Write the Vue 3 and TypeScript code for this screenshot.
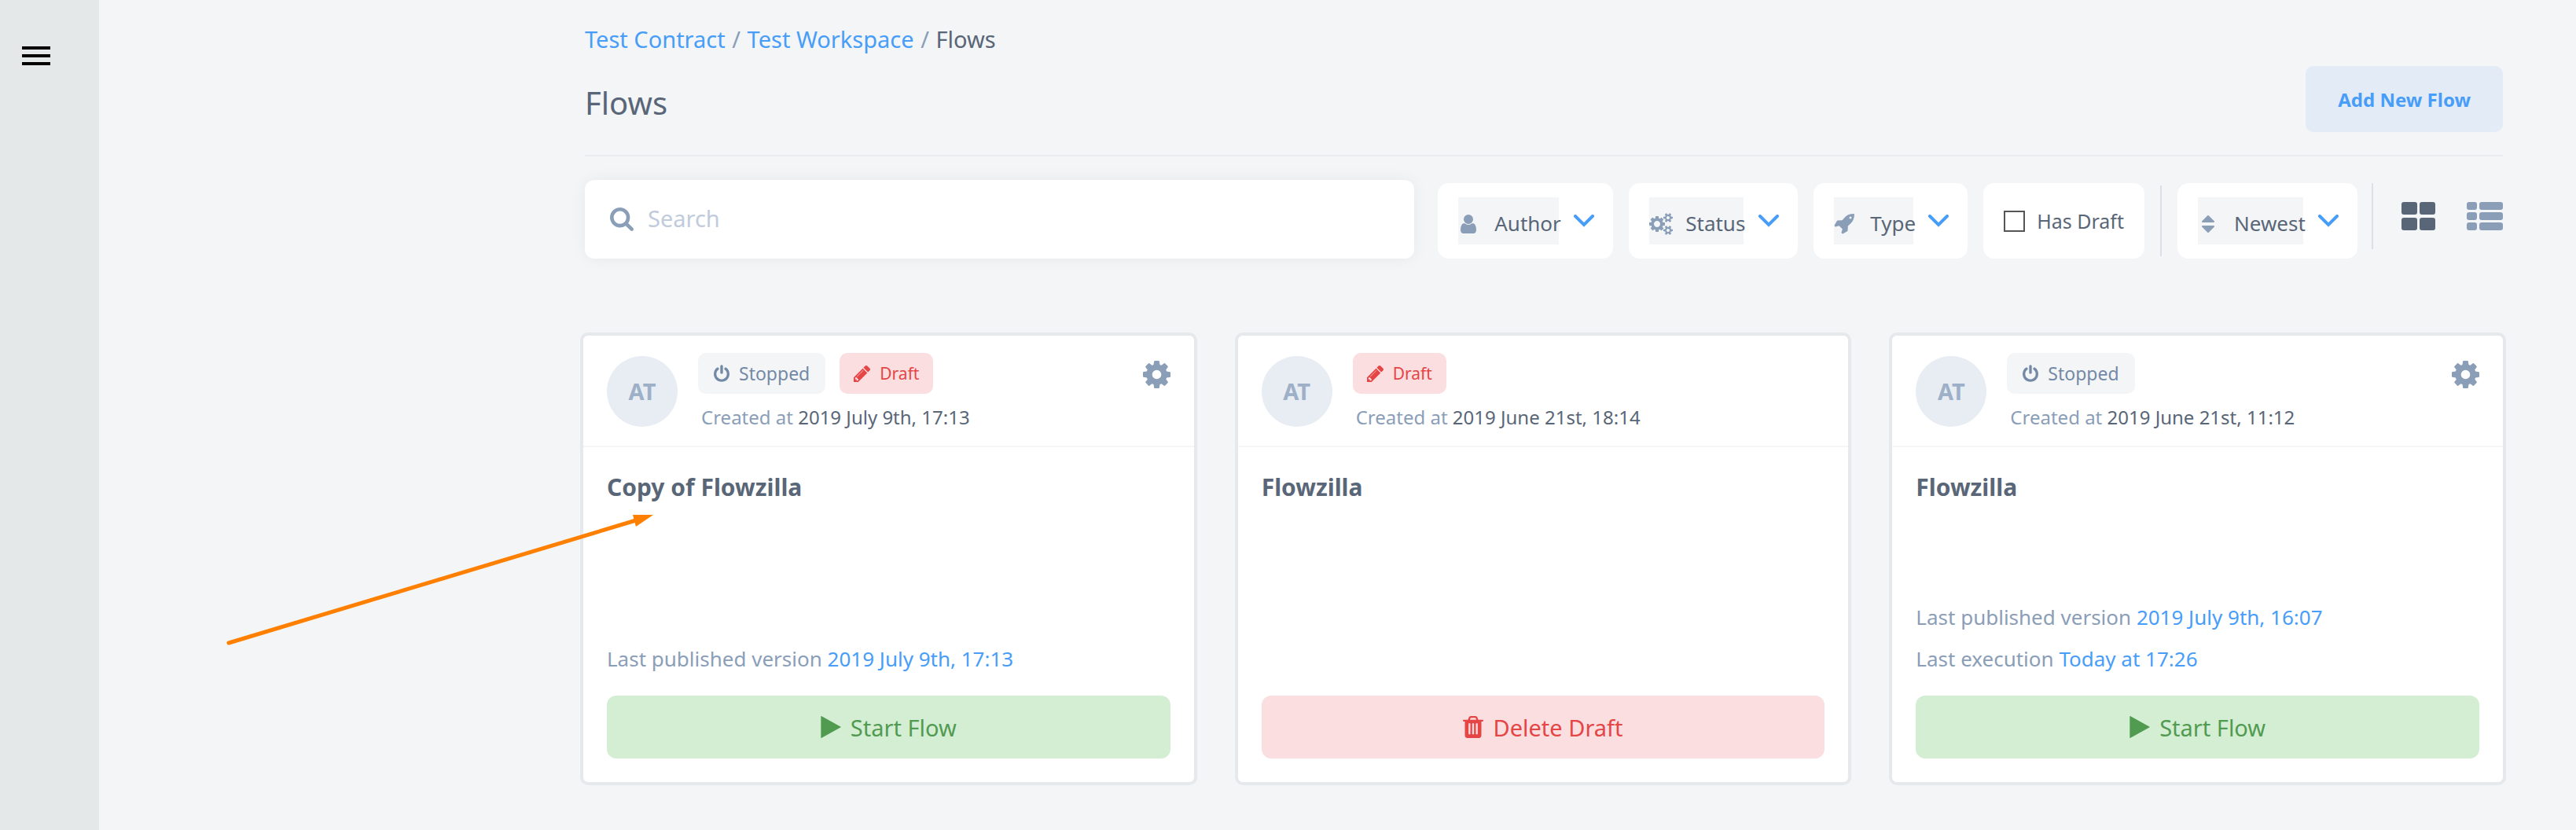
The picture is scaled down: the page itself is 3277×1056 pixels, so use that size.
<script setup lang="ts">
import { ref } from 'vue'

interface Glyph {
  box: string
  d: string
}

interface Filter {
  id: string
  label: string
  icon: string
}

interface Flow {
  id: number
  title: string
  stopped: boolean
  draft: boolean
  created: string
  published?: string
  executed?: string
}

const glyphs: Record<string, Glyph> = {
  search: {
    box: '64 128 1664 1664',
    d: 'M1216 832q0-185-131.5-316.5T768 384 451.5 515.5 320 832t131.5 316.5T768 1280t316.5-131.5T1216 832zm512 832q0 52-38 90t-90 38q-54 0-90-38l-343-342q-179 124-399 124-143 0-273.5-55.5t-225-150-150-225T64 832t55.5-273.5 150-225 225-150T768 128t273.5 55.5 225 150 150 225T1472 832q0 220-124 399l343 343q37 37 37 90z',
  },
  user: {
    box: '256 128 1280 1536',
    d: 'M1536 1399q0 109-62.5 187t-150.5 78h-854q-88 0-150.5-78t-62.5-187q0-85 8.5-160.5t31.5-152 58.5-131 94-89 134.5-34.5q131 128 313 128t313-128q76 0 134.5 34.5t94 89 58.5 131 31.5 152 8.5 160.5zm-256-887q0 159-112.5 271.5t-271.5 112.5-271.5-112.5-112.5-271.5 112.5-271.5 271.5-112.5 271.5 112.5 112.5 271.5z',
  },
  cogs: {
    box: '0 0 1920 1792',
    d: 'M896 896q0-106-75-181t-181-75-181 75-75 181 75 181 181 75 181-75 75-181zm768 512q0-52-38-90t-90-38-90 38-38 90q0 53 37.5 90.5t90.5 37.5 90.5-37.5 37.5-90.5zm0-1024q0-52-38-90t-90-38-90 38-38 90q0 53 37.5 90.5t90.5 37.5 90.5-37.5 37.5-90.5zm-384 421v185q0 10-7 19.5t-16 10.5l-155 24q-11 35-32 76 34 48 90 115 7 11 7 20 0 12-7 19-23 30-82.5 89.5t-78.5 59.5q-11 0-21-7l-115-90q-37 19-77 31-11 108-23 155-7 24-30 24h-186q-11 0-20-7.5t-10-17.5l-23-153q-34-10-75-31l-118 89q-7 7-20 7-11 0-21-8-144-133-144-160 0-9 7-19 10-14 41-53t47-61q-23-44-35-82l-152-24q-10-1-17-9.5t-7-19.5v-185q0-10 7-19.5t16-10.5l155-24q11-35 32-76-34-48-90-115-7-11-7-20 0-12 7-20 22-30 82-89t79-59q11 0 21 7l115 90q34-18 77-32 11-108 23-154 7-24 30-24h186q11 0 20 7.5t10 17.5l23 153q34 10 75 31l118-89q8-7 20-7 11 0 21 8 144 133 144 160 0 8-7 19-12 16-42 54t-45 60q23 48 34 82l152 23q10 2 17 10.5t7 19.5zm640 533v140q0 16-149 31-12 27-30 52 51 113 51 138 0 4-4 7-122 71-124 71-8 0-46-47t-52-68q-20 2-30 2t-30-2q-14 21-52 68t-46 47q-2 0-124-71-4-3-4-7 0-25 51-138-18-25-30-52-149-15-149-31v-140q0-16 149-31 13-29 30-52-51-113-51-138 0-4 4-7 4-2 35-20t59-34 30-16q8 0 46 46.5t52 67.5q20-2 30-2t30 2q51-71 92-112l6-2q4 0 124 70 4 3 4 7 0 25-51 138 17 23 30 52 149 15 149 31zm0-1024v140q0 16-149 31-12 27-30 52 51 113 51 138 0 4-4 7-122 71-124 71-8 0-46-47t-52-68q-20 2-30 2t-30-2q-14 21-52 68t-46 47q-2 0-124-71-4-3-4-7 0-25 51-138-18-25-30-52-149-15-149-31v-140q0-16 149-31 13-29 30-52-51-113-51-138 0-4 4-7 4-2 35-20t59-34 30-16q8 0 46 46.5t52 67.5q20-2 30-2t30 2q51-71 92-112l6-2q4 0 124 70 4 3 4 7 0 25-51 138 17 23 30 52 149 15 149 31z',
  },
  rocket: {
    box: '0 128 1664 1664',
    d: 'M1440 448q0-40-28-68t-68-28-68 28-28 68 28 68 68 28 68-28 28-68zm224-288q0 249-75.5 430.5t-253.5 360.5q-81 80-195 176l-20 379q-2 16-16 26l-384 224q-7 4-16 4-12 0-23-9l-64-64q-13-14-8-32l85-276-281-281-276 85q-3 1-9 1-14 0-23-9l-64-64q-17-19-5-39l224-384q10-14 26-16l379-20q96-114 176-195 188-187 358-258t431-71q14 0 24 9.5t10 22.5z',
  },
  sort: {
    box: '384 192 1024 1408',
    d: 'M1408 1088q0 26-19 45l-448 448q-19 19-45 19t-45-19l-448-448q-19-19-19-45t19-45 45-19h896q26 0 45 19t19 45zm0-384q0 26-19 45t-45 19h-896q-26 0-45-19t-19-45 19-45l448-448q19-19 45-19t45 19l448 448q19 19 19 45z',
  },
  cog: {
    box: '128 128 1536 1536',
    d: 'M1152 896q0-106-75-181t-181-75-181 75-75 181 75 181 181 75 181-75 75-181zm512-109v222q0 12-8 23t-20 13l-185 28q-19 54-39 91 35 50 107 138 10 12 10 25t-9 23q-27 37-99 108t-94 71q-12 0-26-9l-138-108q-44 23-91 38-16 136-29 186-7 28-36 28h-222q-14 0-24.5-8.5t-11.5-21.5l-28-184q-49-16-90-37l-141 107q-10 9-25 9-14 0-25-11-126-114-165-168-7-10-7-23 0-12 8-23 15-21 51-66.5t54-70.5q-27-50-41-99l-183-27q-13-2-21-12.5t-8-23.5v-222q0-12 8-23t19-13l186-28q14-46 39-92-40-57-107-138-10-12-10-24 0-10 9-23 26-36 98.5-107.5t94.5-71.5q13 0 26 10l138 107q44-23 91-38 16-136 29-186 7-28 36-28h222q14 0 24.5 8.5t11.5 21.5l28 184q49 16 90 37l142-107q9-9 24-9 13 0 25 10 129 119 165 170 7 8 7 22 0 12-8 23-15 21-51 66.5t-54 70.5q26 50 41 98l183 28q13 2 21 12.5t8 23.5z',
  },
  power: {
    box: '128 0 1536 1664',
    d: 'M1664 896q0 156-61 298t-164 245-245 164-298 61-298-61-245-164-164-245-61-298q0-182 80.5-343t226.5-270q43-32 95.5-25t83.5 50q32 42 24.5 94.5t-49.5 84.5q-98 74-151.5 181t-53.5 228q0 104 40.5 198.5t109.5 163.5 163.5 109.5 198.5 40.5 198.5-40.5 163.5-109.5 109.5-163.5 40.5-198.5q0-121-53.5-228t-151.5-181q-42-32-49.5-84.5t24.5-94.5q31-43 84-50t95 25q146 109 226.5 270t80.5 343zm-640-768v640q0 52-38 90t-90 38-90-38-38-90v-640q0-52 38-90t90-38 90 38 38 90z',
  },
  pencil: {
    box: '128 149 1515 1515',
    d: 'M491 1536l91-91-235-235-91 91v107h128v128h107zm523-928q0-22-22-22-10 0-17 7l-542 542q-7 7-7 17 0 22 22 22 10 0 17-7l542-542q7-7 7-17zm-54-192l416 416-832 832h-416v-416zm683 96q0 53-37 90l-166 166-416-416 166-165q36-38 90-38 53 0 91 38l235 234q37 39 37 91z',
  },
  play: {
    box: '192 118 1407 1556',
    d: 'M1576 927l-1328 738q-23 13-39.5 3t-16.5-36v-1472q0-26 16.5-36t39.5 3l1328 738q23 13 23 31t-23 31z',
  },
  trash: {
    box: '192 128 1408 1536',
    d: 'M704 1376v-704q0-14-9-23t-23-9h-64q-14 0-23 9t-9 23v704q0 14 9 23t23 9h64q14 0 23-9t9-23zm256 0v-704q0-14-9-23t-23-9h-64q-14 0-23 9t-9 23v704q0 14 9 23t23 9h64q14 0 23-9t9-23zm256 0v-704q0-14-9-23t-23-9h-64q-14 0-23 9t-9 23v704q0 14 9 23t23 9h64q14 0 23-9t9-23zm-544-992h448l-48-117q-7-9-17-11h-317q-10 2-17 11zm928 32v64q0 14-9 23t-23 9h-96v948q0 83-47 143.5t-113 60.5h-832q-66 0-113-58.5t-47-141.5v-952h-96q-14 0-23-9t-9-23v-64q0-14 9-23t23-9h309l70-167q15-37 54-63t79-26h320q40 0 79 26t54 63l70 167h309q14 0 23 9t9 23z',
  },
}

const filters: Filter[] = [
  { id: 'author', label: 'Author', icon: 'user' },
  { id: 'status', label: 'Status', icon: 'cogs' },
  { id: 'type', label: 'Type', icon: 'rocket' },
]

const flows: Flow[] = [
  {
    id: 1,
    title: 'Copy of Flowzilla',
    stopped: true,
    draft: true,
    created: '2019 July 9th, 17:13',
    published: '2019 July 9th, 17:13',
  },
  {
    id: 2,
    title: 'Flowzilla',
    stopped: false,
    draft: true,
    created: '2019 June 21st, 18:14',
  },
  {
    id: 3,
    title: 'Flowzilla',
    stopped: true,
    draft: false,
    created: '2019 June 21st, 11:12',
    published: '2019 July 9th, 16:07',
    executed: 'Today at 17:26',
  },
]

const query = ref('')
const hasDraft = ref(false)
</script>

<template>
  <div class="app">
    <aside class="sidebar">
      <button class="menu" type="button" aria-label="Menu">
        <span></span><span></span><span></span>
      </button>
    </aside>

    <main class="main">
      <nav class="crumbs" aria-label="Breadcrumb">
        <a href="#">Test Contract</a> <i>/</i> <a href="#">Test Workspace</a> <i>/</i> <span>Flows</span>
      </nav>

      <header class="head">
        <h1>Flows</h1>
        <button class="add" type="button">Add New Flow</button>
      </header>

      <div class="toolbar">
        <label class="search">
          <svg class="ico-search" :viewBox="glyphs.search.box"><path :d="glyphs.search.d" /></svg>
          <input v-model="query" type="text" placeholder="Search" aria-label="Search" />
        </label>

        <div class="filters">
          <label v-for="f in filters" :key="f.id" class="pill">
            <span class="field">
              <span class="slot">
                <svg :class="`ico-${f.icon}`" :viewBox="glyphs[f.icon].box"><path :d="glyphs[f.icon].d" /></svg>
              </span>
              <select :aria-label="f.label"><option>{{ f.label }}</option></select>
            </span>
            <svg class="chevron" viewBox="0 0 26 16"><path d="M2 2l11 11L24 2" /></svg>
          </label>

          <label class="pill check">
            <input v-model="hasDraft" type="checkbox" />
            <span>Has Draft</span>
          </label>

          <span class="rule"></span>

          <label class="pill">
            <span class="field">
              <span class="slot">
                <svg class="ico-sort" :viewBox="glyphs.sort.box"><path :d="glyphs.sort.d" /></svg>
              </span>
              <select aria-label="Sort by"><option>Newest</option></select>
            </span>
            <svg class="chevron" viewBox="0 0 26 16"><path d="M2 2l11 11L24 2" /></svg>
          </label>
        </div>

        <div class="views">
          <button type="button" class="view active" aria-label="Grid view">
            <svg width="43" height="36" viewBox="0 0 43 36">
              <rect width="20" height="16" rx="3" />
              <rect x="23" width="20" height="16" rx="3" />
              <rect y="20" width="20" height="16" rx="3" />
              <rect x="23" y="20" width="20" height="16" rx="3" />
            </svg>
          </button>
          <button type="button" class="view" aria-label="List view">
            <svg width="46" height="36" viewBox="0 0 46 36">
              <rect width="13" height="10" rx="3" />
              <rect x="16" width="30" height="10" rx="3" />
              <rect y="13" width="13" height="10" rx="3" />
              <rect x="16" y="13" width="30" height="10" rx="3" />
              <rect y="26" width="13" height="10" rx="3" />
              <rect x="16" y="26" width="30" height="10" rx="3" />
            </svg>
          </button>
        </div>
      </div>

      <section class="cards">
        <article v-for="flow in flows" :key="flow.id" class="card">
          <header class="card-head">
            <span class="avatar">AT</span>
            <div class="info">
              <div class="chips">
                <span v-if="flow.stopped" class="chip stopped">
                  <svg class="ico-power" :viewBox="glyphs.power.box"><path :d="glyphs.power.d" /></svg>
                  Stopped
                </span>
                <span v-if="flow.draft" class="chip draft">
                  <svg class="ico-pencil" :viewBox="glyphs.pencil.box"><path :d="glyphs.pencil.d" /></svg>
                  Draft
                </span>
              </div>
              <p class="created">Created at <time>{{ flow.created }}</time></p>
            </div>
            <button v-if="flow.stopped" class="gear" type="button" aria-label="Flow settings">
              <svg :viewBox="glyphs.cog.box"><path :d="glyphs.cog.d" /></svg>
            </button>
          </header>

          <div class="card-body">
            <h2>{{ flow.title }}</h2>
            <div class="meta">
              <p v-if="flow.published">Last published version <a href="#">{{ flow.published }}</a></p>
              <p v-if="flow.executed">Last execution <a href="#">{{ flow.executed }}</a></p>
            </div>
            <button v-if="flow.stopped" class="action start" type="button">
              <svg class="ico-action" :viewBox="glyphs.play.box"><path :d="glyphs.play.d" /></svg>
              Start Flow
            </button>
            <button v-else class="action delete" type="button">
              <svg class="ico-action" :viewBox="glyphs.trash.box"><path :d="glyphs.trash.d" /></svg>
              Delete Draft
            </button>
          </div>
        </article>
      </section>
    </main>

    <svg class="pointer" width="548" height="172" viewBox="0 0 548 172" aria-hidden="true">
      <path class="shaft" d="M6 168L524 12" />
      <path d="M520 5h26l-22 15z" />
    </svg>
  </div>
</template>

<style>
body {
  background: #f3f5f7;
}
</style>

<style scoped>
.app {
  position: relative;
  display: flex;
  min-height: 100vh;
  color: #596677;
  font-family: "Noto Sans", "Open Sans", sans-serif;
  font-size: 26px;
}

.app * {
  box-sizing: border-box;
}

button,
input,
select {
  margin: 0;
  padding: 0;
  border: 0;
  background: none;
  color: inherit;
  font: inherit;
}

a {
  color: #489df8;
  text-decoration: none;
}

h1,
h2,
p {
  margin: 0;
}

svg {
  display: block;
  flex: none;
  fill: currentColor;
}

.sidebar {
  flex: none;
  width: 126px;
  padding: 59px 28px;
  background: #e4e8e8;
}

.menu {
  display: flex;
  flex-direction: column;
  gap: 6px;
  width: 36px;
}

.menu span {
  height: 4px;
  background: #000;
}

.main {
  flex: 1;
  min-width: 0;
  padding: 30px 93px 48px 618px;
}

.crumbs {
  font-size: 29px;
  line-height: 40px;
}

.crumbs i {
  margin: 0 1px;
  color: #8b9eb8;
  font-style: normal;
}

.head {
  display: flex;
  align-items: center;
  justify-content: space-between;
  margin-top: 14px;
  padding-bottom: 29px;
  border-bottom: 2px solid #e9ebee;
}

h1 {
  padding-top: 10px;
  font-size: 40px;
  font-weight: 400;
  line-height: 56px;
}

.add {
  height: 84px;
  padding: 0 41px;
  border-radius: 10px;
  background: #e3ebf6;
  color: #489df8;
  font-size: 24px;
  font-weight: 700;
}

.toolbar {
  display: flex;
  align-items: flex-end;
  margin-top: 30px;
}

.search {
  display: flex;
  flex: 1;
  align-items: center;
  gap: 18px;
  height: 100px;
  padding: 0 32px;
  border-radius: 12px;
  background: #fff;
  box-shadow: 0 0 20px rgba(0, 0, 0, 0.06);
}

.search input {
  flex: 1;
  min-width: 0;
  height: 60px;
  padding-bottom: 4px;
  font-size: 29px;
}

.search input::placeholder {
  color: #c0cbdb;
  opacity: 1;
}

.ico-search {
  width: 30px;
  height: 30px;
  color: #8b9eb8;
}

.filters {
  display: flex;
  align-items: center;
  gap: 20px;
  margin-left: 30px;
}

.pill {
  display: flex;
  align-items: center;
  height: 96px;
  padding: 0 24px 0 26px;
  border-radius: 14px;
  background: #fff;
}

.field {
  display: flex;
  align-items: center;
  height: 60px;
  background: #f3f5f7;
}

.slot {
  display: flex;
  justify-content: safe center;
  width: 26px;
  margin-right: 20px;
  padding-top: 8px;
  color: #8b9eb8;
}

.field select {
  height: 60px;
  margin-right: -3px;
  padding-top: 6px;
  appearance: none;
}

.chevron {
  width: 26px;
  height: 16px;
  margin-left: 19px;
  fill: none;
  stroke: #489df8;
  stroke-width: 4;
  stroke-linecap: round;
}

.ico-user {
  width: 20px;
  height: 24px;
}

.ico-cogs {
  width: 30px;
  height: 28px;
}

.ico-rocket {
  width: 26px;
  height: 26px;
}

.ico-sort {
  width: 16px;
  height: 22px;
}

.check {
  gap: 15px;
  padding: 0 26px;
  font-size: 25px;
}

.check input {
  width: 27px;
  height: 27px;
  border: 2px solid #555;
  appearance: none;
}

.rule {
  width: 2px;
  height: 90px;
  background: #dcdfe8;
}

.views {
  display: flex;
  align-items: center;
  gap: 40px;
  height: 84px;
  margin: 0 0 12px 18px;
  padding-left: 36px;
  border-left: 2px solid #dcdfe8;
}

.view {
  color: #8b9eb8;
}

.view.active {
  color: #596677;
}

.cards {
  display: grid;
  grid-template-columns: repeat(3, 1fr);
  gap: 48px;
  margin: 94px -4px 0 -6px;
}

.card {
  display: flex;
  flex-direction: column;
  border: 4px solid #e6e9ec;
  border-radius: 10px;
  background: #fff;
}

.card-head {
  display: flex;
  align-items: flex-start;
  gap: 26px;
  padding: 22px 30px 18px;
  border-bottom: 2px solid #f3f5f7;
}

.avatar {
  display: flex;
  flex: none;
  align-items: center;
  justify-content: center;
  width: 90px;
  height: 90px;
  margin-top: 4px;
  border-radius: 50%;
  background: #e8edf4;
  color: #9eb0c7;
  font-size: 29px;
  font-weight: 700;
  line-height: 40px;
}

.info {
  flex: 1;
}

.chips {
  display: flex;
  gap: 18px;
}

.chip {
  display: flex;
  align-items: center;
  gap: 12px;
  height: 52px;
  padding: 0 20px;
  border-radius: 10px;
  font-size: 23px;
}

.stopped {
  background: #f3f5f7;
  color: #7489a6;
}

.draft {
  padding: 0 18px;
  background: #fadee0;
  color: #e54545;
  font-size: 21px;
}

.ico-power {
  width: 20px;
  height: 22px;
}

.ico-pencil {
  width: 21px;
  height: 21px;
}

.created {
  margin-top: 12px;
  padding-left: 4px;
  color: #8b9eb8;
  font-size: 24px;
  line-height: 36px;
}

.created time {
  color: #596677;
}

.gear {
  margin-top: 10px;
  color: #8b9eb8;
}

.gear svg {
  width: 35px;
  height: 35px;
}

.card-body {
  display: flex;
  flex: 1;
  flex-direction: column;
  min-height: 426px;
  padding: 30px;
}

h2 {
  font-size: 30px;
  font-weight: 700;
  line-height: 42px;
}

.meta {
  margin-top: auto;
  color: #8b9eb8;
  line-height: 53px;
}

.action {
  display: flex;
  align-items: center;
  justify-content: center;
  gap: 12px;
  height: 80px;
  margin-top: 20px;
  border-radius: 12px;
  font-size: 29px;
}

.start {
  background: #d4eed4;
  color: #519b51;
}

.delete {
  background: #fadee0;
  color: #e54545;
}

.ico-action {
  width: 26px;
  height: 28px;
}

.pointer {
  position: absolute;
  top: 650px;
  left: 285px;
  color: #ff8000;
  pointer-events: none;
}

.shaft {
  stroke: currentColor;
  stroke-width: 5;
  stroke-linecap: round;
}
</style>
